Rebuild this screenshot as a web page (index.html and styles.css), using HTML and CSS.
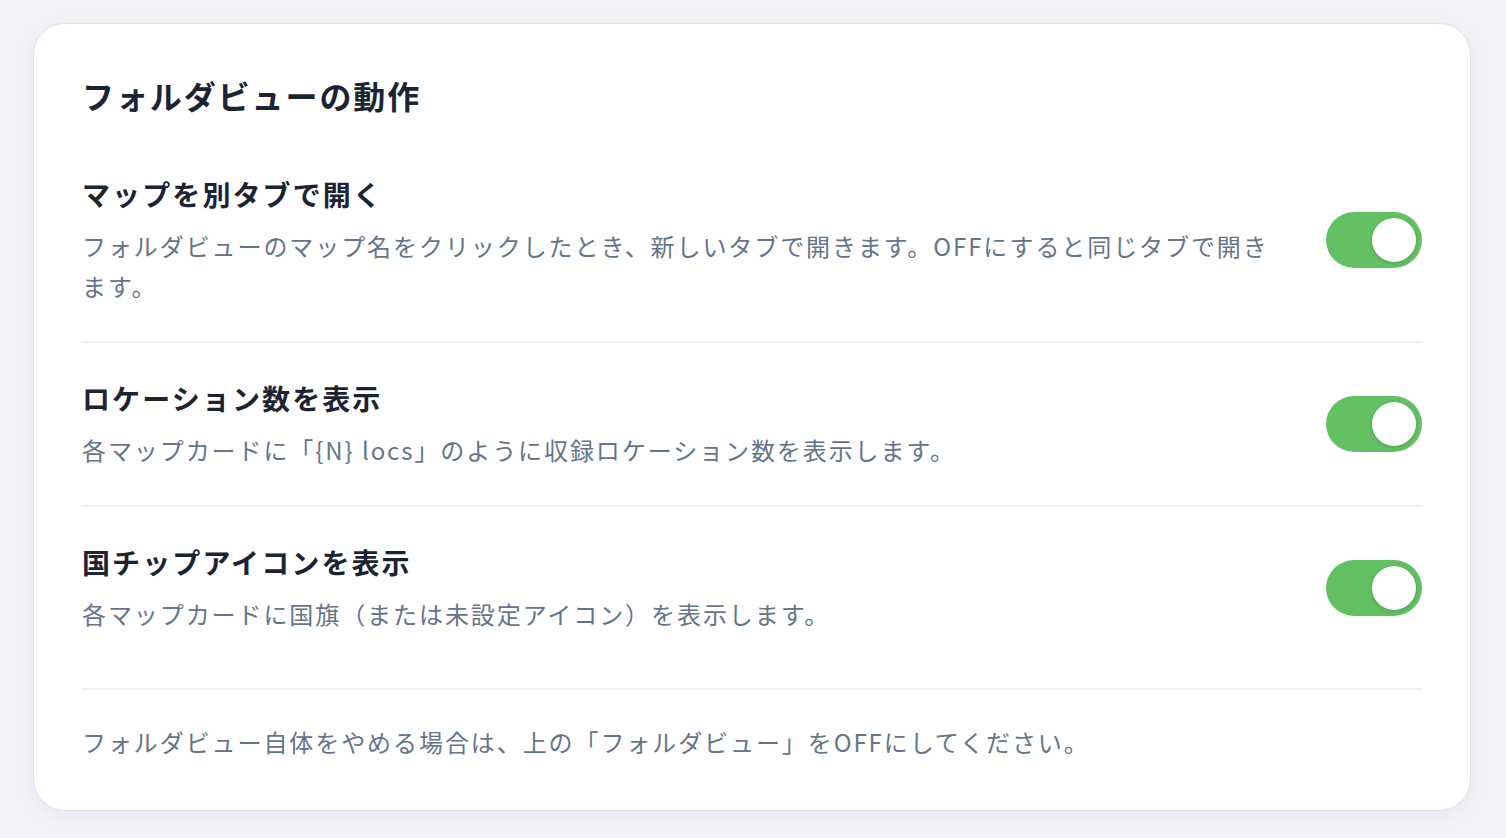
FILE: index.html
```html
<!DOCTYPE html>
<html lang="ja">
<head>
    <meta charset="UTF-8">
    <meta name="viewport" content="width=device-width, initial-scale=1.0">
    <title>フォルダビューの動作</title>
    <link rel="stylesheet" href="styles.css">
</head>
<body>

    <div class="settings-card">
        <h2 class="card-title">フォルダビューの動作</h2>

        <div class="setting-row">
            <div class="setting-text">
                <p class="setting-label">マップを別タブで開く</p>
                <p class="setting-desc">フォルダビューのマップ名をクリックしたとき、新しいタブで開きます。OFFにすると同じタブで開きます。</p>
            </div>
            <label class="toggle">
                <input type="checkbox" checked>
                <span class="slider"></span>
            </label>
        </div>

        <div class="setting-row">
            <div class="setting-text">
                <p class="setting-label">ロケーション数を表示</p>
                <p class="setting-desc">各マップカードに「{N} locs」のように収録ロケーション数を表示します。</p>
            </div>
            <label class="toggle">
                <input type="checkbox" checked>
                <span class="slider"></span>
            </label>
        </div>

        <div class="setting-row">
            <div class="setting-text">
                <p class="setting-label">国チップアイコンを表示</p>
                <p class="setting-desc">各マップカードに国旗（または未設定アイコン）を表示します。</p>
            </div>
            <label class="toggle">
                <input type="checkbox" checked>
                <span class="slider"></span>
            </label>
        </div>

        <p class="footer-note">フォルダビュー自体をやめる場合は、上の「フォルダビュー」をOFFにしてください。</p>
    </div>

</body>
</html>
```

FILE: styles.css
```css
body {
    font-family: "Noto Sans CJK JP", "Noto Sans", sans-serif;
    background-color: #F1F3F7;
    margin: 0;
    padding: 23px 35px 28px 33px;
}

.settings-card {
    background: #FFFFFF;
    border: 1px solid #DEE3EB;
    border-radius: 32px;
    padding: 48px;
    box-shadow: 0px 4px 18px rgba(30, 40, 60, 0.05);
}

.card-title {
    font-size: 32px;
    font-weight: 700;
    line-height: 46px;
    letter-spacing: 0.06em;
    color: #1C2333;
    margin: 0 0 21px 0;
}

.setting-row {
    display: flex;
    align-items: center;
    gap: 40px;
    padding: 35px 0;
    border-bottom: 2px solid #EDF0F4;
}

.setting-row:last-of-type {
    border-bottom: none;
    padding-bottom: 54px;
}

.setting-text {
    flex: 1;
}

.setting-label {
    font-size: 28px;
    font-weight: 700;
    line-height: 40px;
    letter-spacing: 0.075em;
    color: #1C2333;
    margin: 0 0 12px 0;
}

.setting-desc {
    font-size: 24px;
    line-height: 40px;
    letter-spacing: 0.08em;
    color: #64748B;
    margin: 0;
}

.toggle {
    position: relative;
    flex-shrink: 0;
    width: 96px;
    height: 56px;
    cursor: pointer;
}

.toggle input {
    display: none;
}

.slider {
    position: absolute;
    inset: 0;
    background-color: #CBD2DC;
    border-radius: 28px;
    transition: background-color 0.2s ease;
}

.slider::before {
    content: "";
    position: absolute;
    top: 6px;
    left: 6px;
    width: 44px;
    height: 44px;
    border-radius: 50%;
    background-color: #FFFFFF;
    box-shadow: 0px 1px 4px rgba(0, 0, 0, 0.2);
    transition: transform 0.2s ease;
}

.toggle input:checked + .slider {
    background-color: #63C164;
}

.toggle input:checked + .slider::before {
    transform: translateX(40px);
}

.footer-note {
    font-size: 24px;
    line-height: 40px;
    letter-spacing: 0.08em;
    color: #64748B;
    margin: 0;
    padding-top: 32px;
    border-top: 2px solid #EDF0F4;
}
```
